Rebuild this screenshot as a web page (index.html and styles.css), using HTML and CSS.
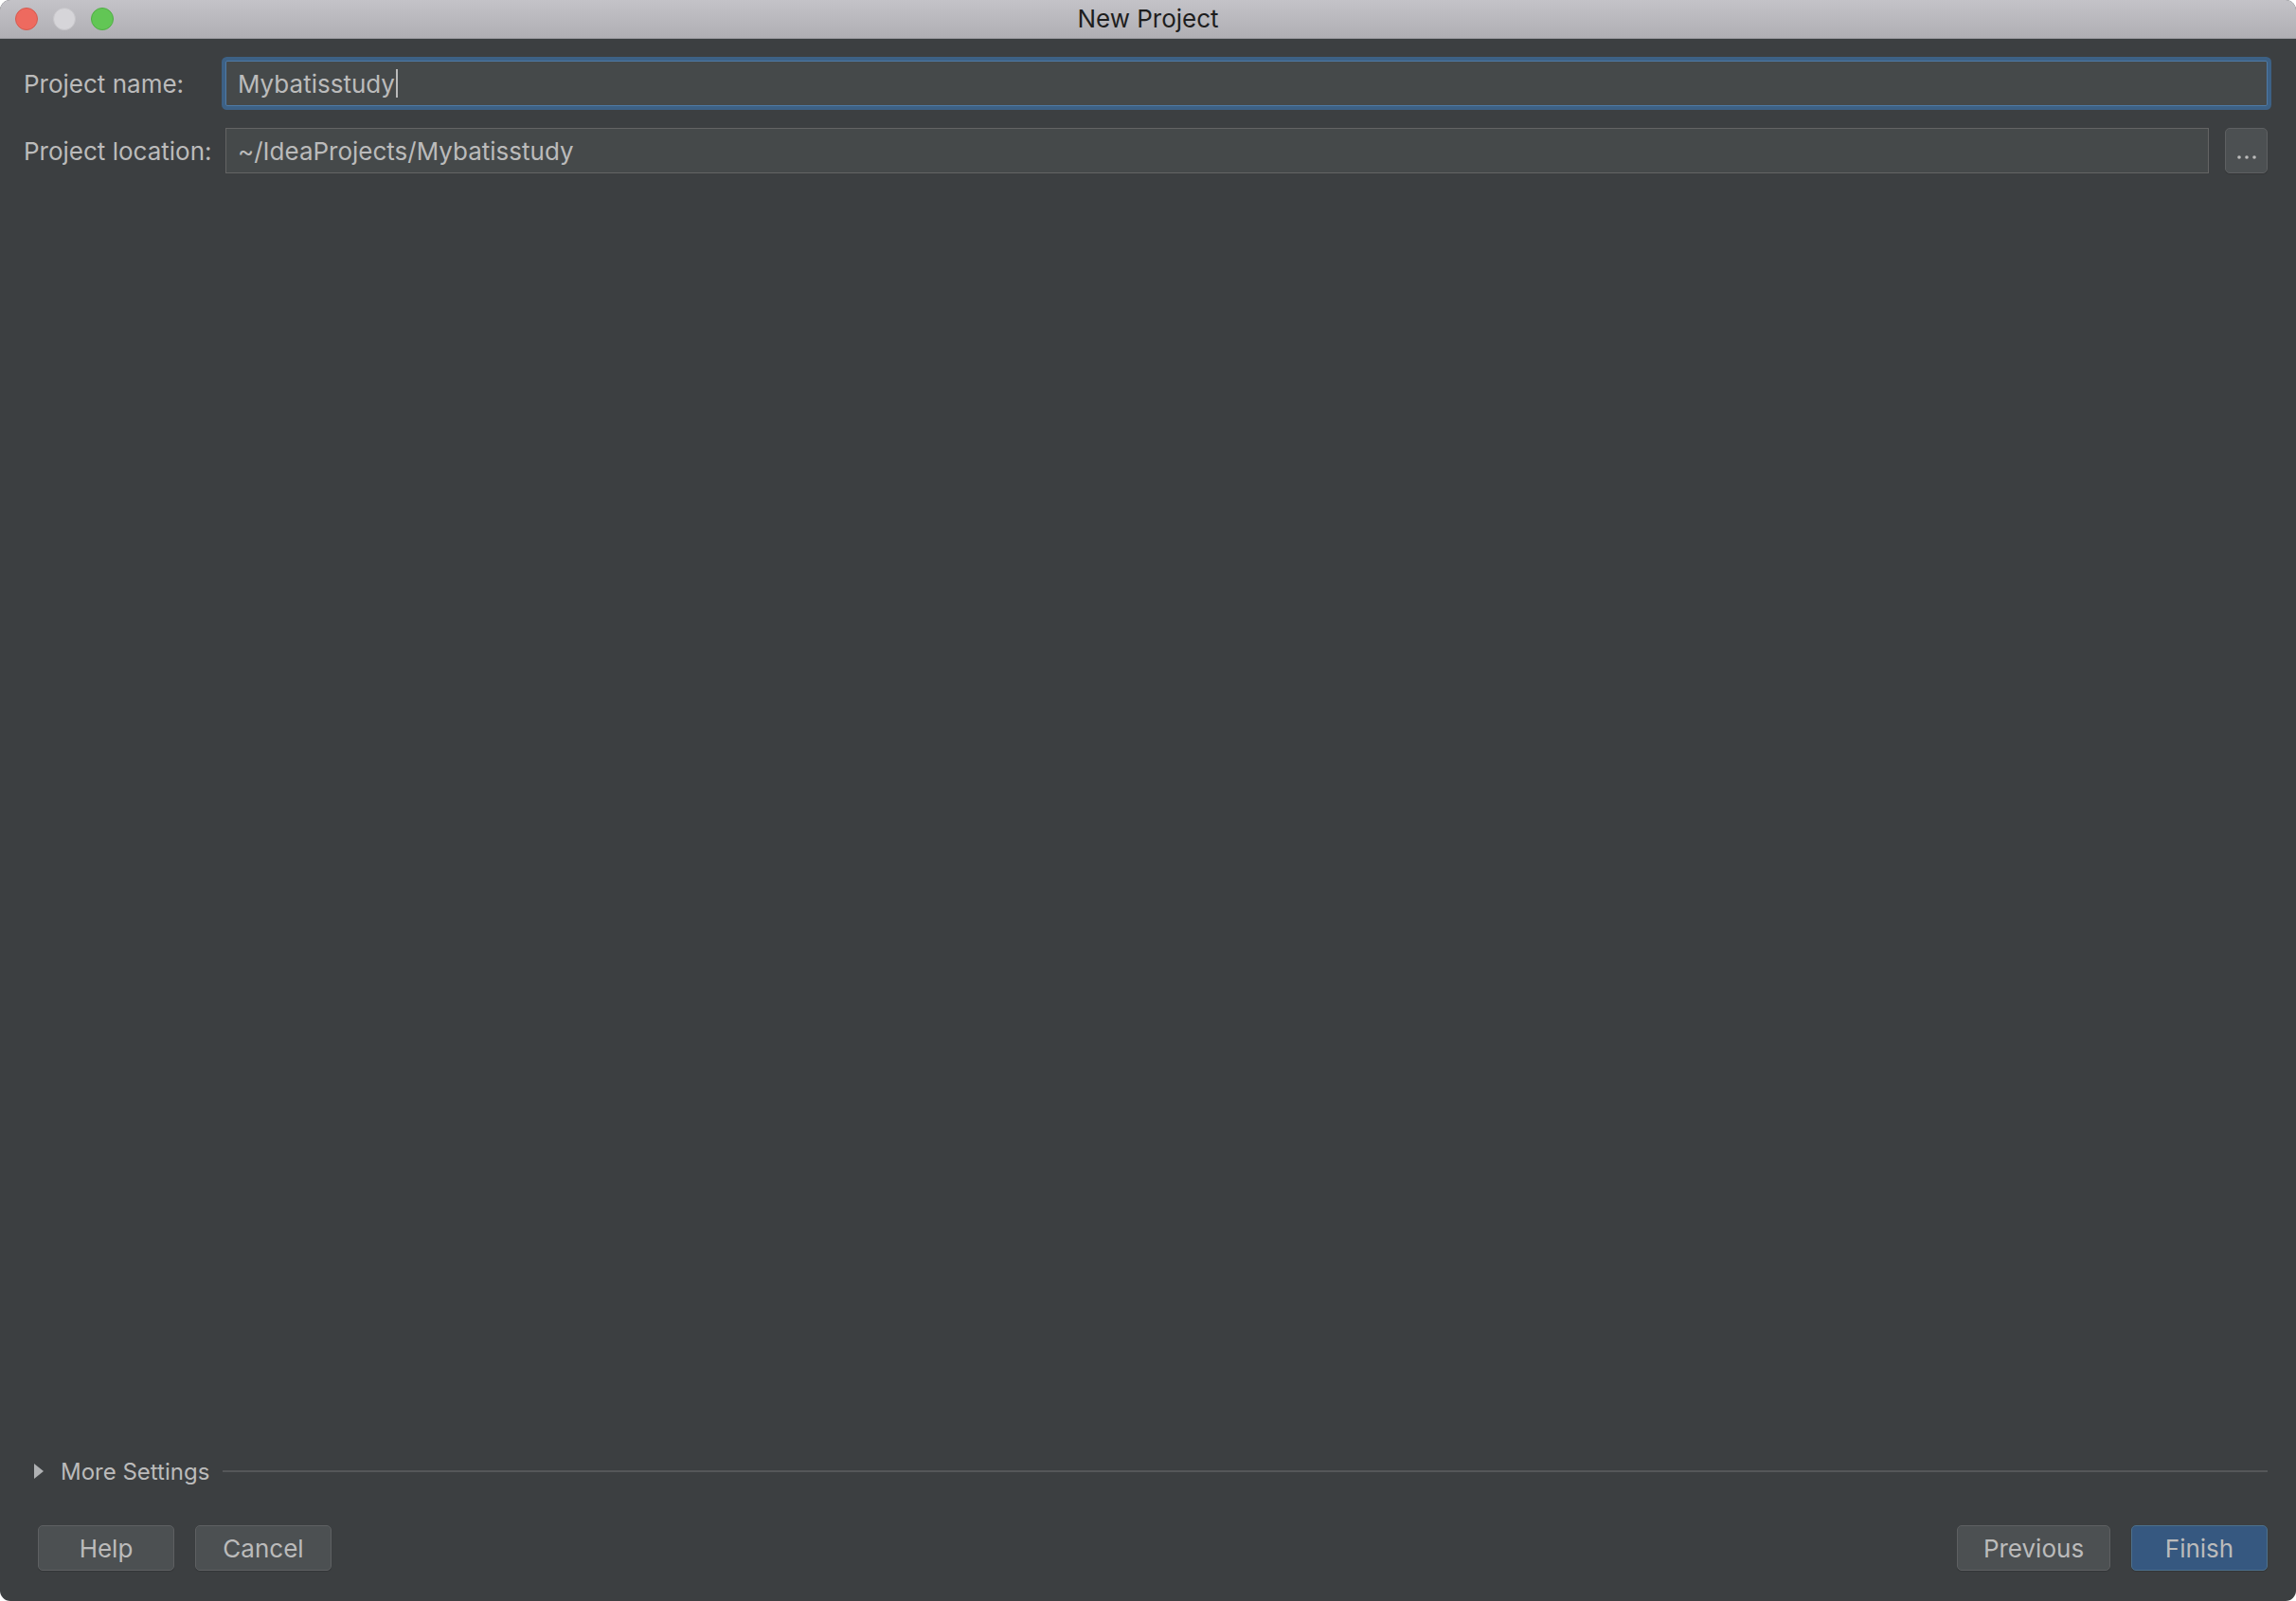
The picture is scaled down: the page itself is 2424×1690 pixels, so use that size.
FILE: index.html
```html
<!DOCTYPE html>
<html lang="en">
<head>
    <meta charset="UTF-8">
    <title>New Project</title>
    <link rel="stylesheet" href="styles.css">
</head>
<body>
    <div class="window">
        <!-- title bar -->
        <div class="title-bar">
            <div class="lights">
                <span class="light close"></span>
                <span class="light min"></span>
                <span class="light max"></span>
            </div>
            <div class="title">New Project</div>
        </div>

        <div class="content">
            <div class="form">
                <label class="label">Project name:</label>
                <div class="field focused span-2">Mybatisstudy<span class="caret"></span></div>

                <label class="label">Project location:</label>
                <div class="field">~/IdeaProjects/Mybatisstudy</div>
                <div class="browse">
                    <svg width="20" height="6" viewBox="0 0 20 6">
                        <circle cx="2" cy="3" r="1.8" fill="#bbbbbb"/>
                        <circle cx="10" cy="3" r="1.8" fill="#bbbbbb"/>
                        <circle cx="18" cy="3" r="1.8" fill="#bbbbbb"/>
                    </svg>
                </div>
            </div>

            <div class="spacer"></div>

            <div class="more-settings">
                <svg class="arrow" width="10" height="16" viewBox="0 0 10 16">
                    <path d="M0 0 L10 8 L0 16 Z" fill="#afb1b3"/>
                </svg>
                <span class="more-text">More Settings</span>
                <div class="rule"></div>
            </div>

            <div class="buttons">
                <div class="btn-group">
                    <button class="btn">Help</button>
                    <button class="btn">Cancel</button>
                </div>
                <div class="btn-group">
                    <button class="btn wide">Previous</button>
                    <button class="btn primary">Finish</button>
                </div>
            </div>
        </div>
    </div>
</body>
</html>
```

FILE: styles.css
```css
* {
    margin: 0;
    padding: 0;
    box-sizing: border-box;
}

body {
    width: 2424px;
    height: 1690px;
    background-color: #ffffff;
    font-family: Inter, "Liberation Sans", sans-serif;
    overflow: hidden;
}

/* window frame */
.window {
    width: 2424px;
    height: 1690px;
    border-radius: 11px;
    overflow: hidden;
    background-color: #3c3f41;
    display: flex;
    flex-direction: column;
}

/* title bar */
.title-bar {
    height: 41px;
    flex-shrink: 0;
    background: linear-gradient(#c4c3c8, #b0afb4);
    border-bottom: 1px solid #9c9ba0;
    display: flex;
    align-items: center;
    position: relative;
}

.lights {
    display: flex;
    gap: 16px;
    padding-left: 16px;
}

.light {
    width: 24px;
    height: 24px;
    border-radius: 50%;
    display: block;
}

.light.close {
    background-color: #ee6a5f;
    border: 1px solid #d55a4f;
}

.light.min {
    background-color: #d6d5d9;
    border: 1px solid #c6c5c9;
}

.light.max {
    background-color: #62c655;
    border: 1px solid #50ad45;
}

.title {
    position: absolute;
    left: 0;
    right: 0;
    top: 0;
    bottom: 0;
    display: flex;
    align-items: center;
    justify-content: center;
    font-size: 26px;
    color: #1e1e1e;
    padding-bottom: 1px;
}

/* content */
.content {
    flex: 1;
    display: flex;
    flex-direction: column;
    padding: 23px 30px 32px 25px;
}

.form {
    display: grid;
    grid-template-columns: 198px 1fr 47px;
    column-gap: 15px;
    row-gap: 23px;
    align-items: center;
}

.label {
    font-size: 26px;
    color: #bbbbbb;
    white-space: nowrap;
}

.field {
    height: 48px;
    background-color: #45494a;
    border: 1.5px solid #646464;
    color: #bbbbbb;
    font-size: 26px;
    padding-left: 12px;
    display: flex;
    align-items: center;
}

.field.span-2 {
    grid-column: span 2;
}

.field.focused {
    border: 1.5px solid #4e7aa6;
    border-radius: 2px;
    box-shadow: 0 0 0 4px #3d6185;
}

.caret {
    display: inline-block;
    width: 2px;
    height: 30px;
    background-color: #bbbbbb;
    margin-left: 1px;
}

.browse {
    height: 48px;
    margin-left: 2px;
    background-color: #4c5052;
    border: 1.5px solid #5e6062;
    border-radius: 5px;
    display: flex;
    justify-content: center;
    align-items: flex-end;
    padding-bottom: 13px;
    box-shadow: 0 1px 1px rgba(0, 0, 0, 0.15);
}

.spacer {
    flex: 1;
}

/* more settings */
.more-settings {
    display: flex;
    align-items: center;
    height: 30px;
    padding-left: 11px;
}

.more-settings .arrow {
    margin-right: 18px;
}

.more-text {
    font-size: 24px;
    color: #bbbbbb;
    margin-right: 14px;
}

.rule {
    flex: 1;
    height: 2px;
    background-color: #555759;
}

/* bottom buttons */
.buttons {
    margin-top: 42px;
    display: flex;
    justify-content: space-between;
    padding-left: 15px;
}

.btn-group {
    display: flex;
    gap: 22px;
}

.btn {
    width: 144px;
    height: 48px;
    font-family: Inter, "Liberation Sans", sans-serif;
    font-size: 26px;
    color: #bbbbbb;
    background-color: #4c5052;
    border: 1.5px solid #5e6062;
    border-radius: 5px;
    box-shadow: 0 1px 1px rgba(0, 0, 0, 0.15);
}

.btn.wide {
    width: 162px;
}

.btn.primary {
    background-color: #365880;
    border-color: #4c708c;
}
```
